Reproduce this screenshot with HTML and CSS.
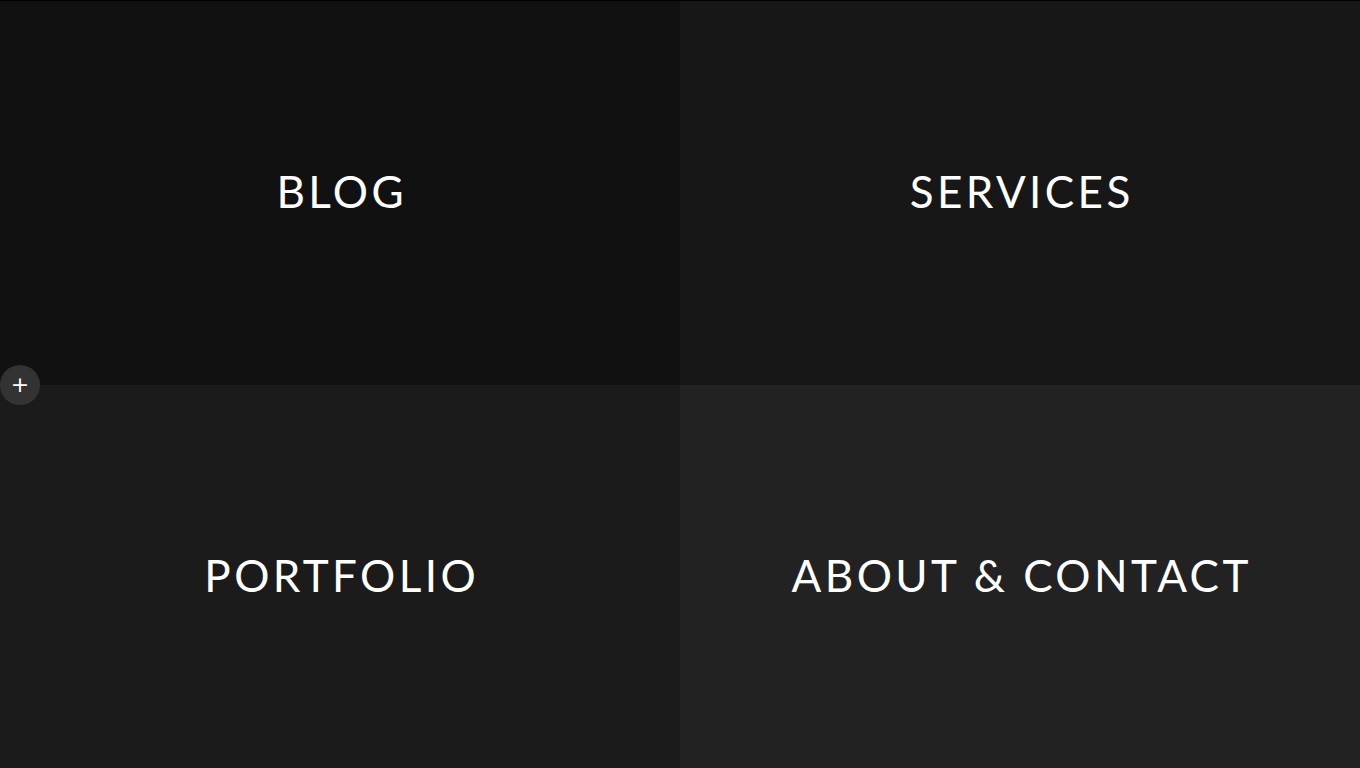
FILE: index.html
```html
<!DOCTYPE html>
<html>
<head>
<meta charset="utf-8">
<link rel="stylesheet" href="styles.css">
</head>
<body>
<div class="grid">
  <a class="tile t1" href="#">BLOG</a>
  <a class="tile t2" href="#">SERVICES</a>
  <a class="tile t3" href="#">PORTFOLIO</a>
  <a class="tile t4" href="#">ABOUT &amp; CONTACT</a>
</div>
<button class="plus" aria-label="open">+</button>
</body>
</html>
```
FILE: styles.css
```css
html, body { margin: 0; padding: 0; }
body {
  background: #111;
  border-top: 1px solid #000;
  height: 767px;
  overflow: hidden;
  font-family: Lato, "Liberation Sans", sans-serif;
}
.grid {
  display: grid;
  grid-template-columns: 680px 680px;
  grid-template-rows: 384px 383px;
  height: 767px;
}
.tile {
  display: flex;
  align-items: center;
  justify-content: center;
  padding-bottom: 4px;
  color: #fff;
  text-decoration: none;
  font-size: 44px;
  font-weight: 400;
  letter-spacing: 3.4px;
  text-indent: 3.4px;
}
.t1 { background: #111111; }
.t2 { background: #171717; }
.t3 { background: #1b1b1b; }
.t4 { background: #222222; }
.plus {
  position: absolute;
  left: 0;
  top: 365px;
  width: 40px;
  height: 40px;
  border-radius: 50%;
  border: none;
  background: #333;
  color: #fff;
  font-family: "DejaVu Sans", sans-serif;
  font-size: 22px;
  line-height: 40px;
  padding: 0;
  text-align: center;
}
```
